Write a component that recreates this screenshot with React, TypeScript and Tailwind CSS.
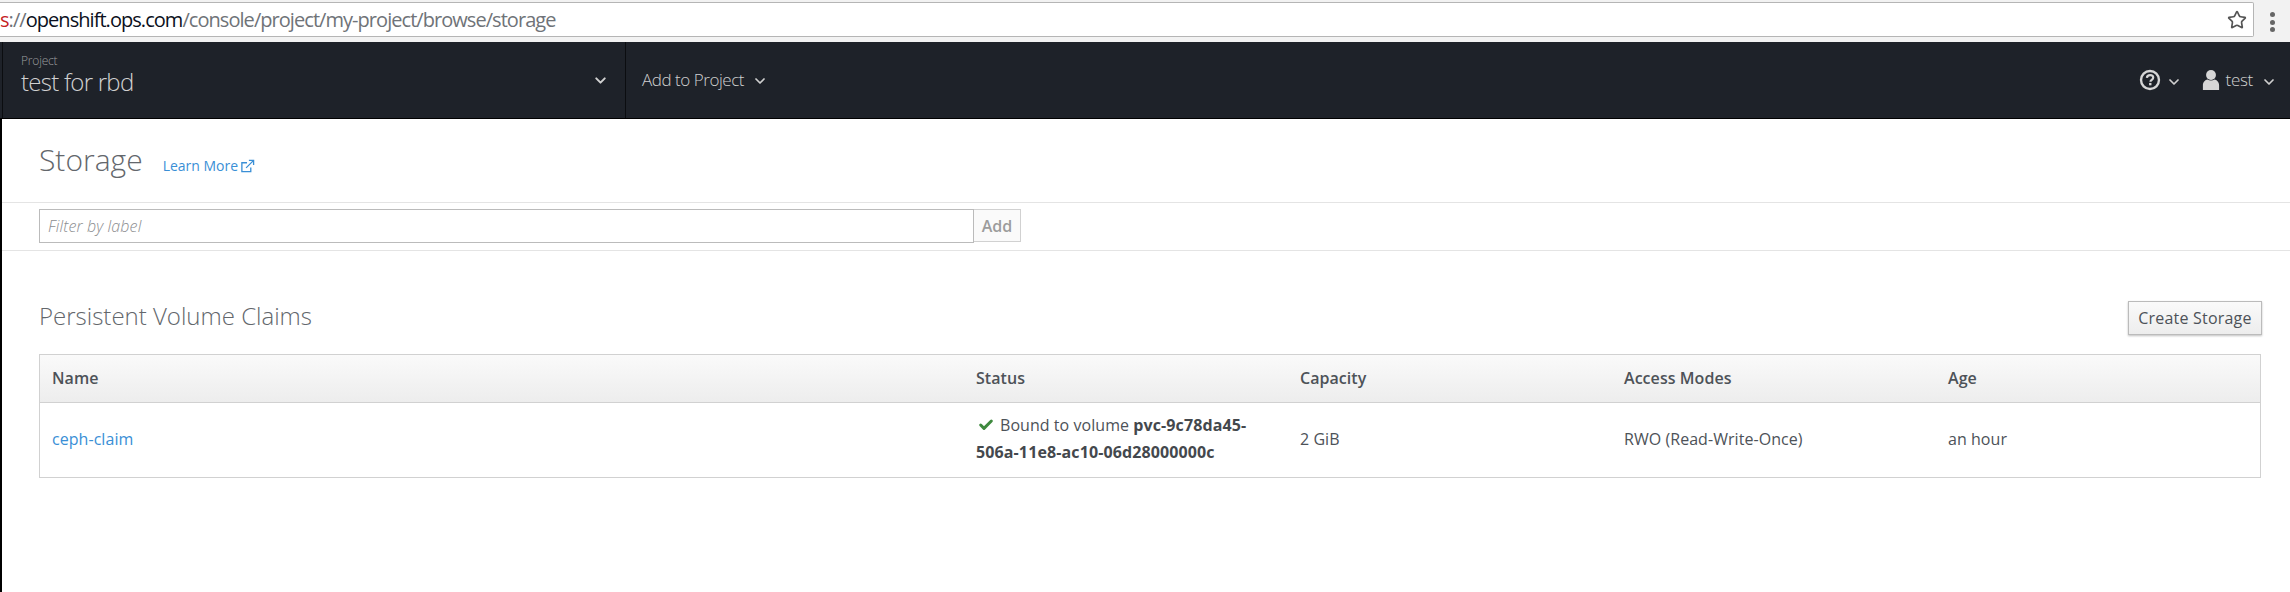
import React from 'react';
import { ChevronDown, Star, Check } from 'lucide-react';

const columns = [
  { label: 'Name', width: 'w-[924px]' },
  { label: 'Status', width: 'w-[324px]' },
  { label: 'Capacity', width: 'w-[324px]' },
  { label: 'Access Modes', width: 'w-[324px]' },
  { label: 'Age', width: 'flex-1' },
];

/* browser chrome cropped at the top of the screenshot */
const AddressBar = () => (
  <div className="h-[42px] bg-[#f2f2f2] pt-[2px] flex items-start">
    <div className="h-[35px] w-[2254px] bg-white border-t border-b border-r border-[#b5b5b5] rounded-r-[2px] flex items-center overflow-hidden">
      <span className="text-[20px] leading-none whitespace-nowrap font-['Open_Sans',sans-serif] tracking-[-0.95px]">
        <span className="text-[#c5221f]">s</span>
        <span className="text-[#6f7378]">://</span>
        <span className="text-[#0b1020]">openshift.ops.com</span>
        <span className="text-[#6f7378]">/console/project/my-project/browse/storage</span>
      </span>
      <Star size={20} strokeWidth={2} className="ml-auto mr-[6px] text-[#555]" />
    </div>
    <div className="flex-1 flex flex-col items-center gap-[2.5px] pt-[10px]">
      <i className="w-[5px] h-[5px] rounded-full bg-[#666]" />
      <i className="w-[5px] h-[5px] rounded-full bg-[#666]" />
      <i className="w-[5px] h-[5px] rounded-full bg-[#666]" />
    </div>
  </div>
);

const TopNav = () => (
  <div className="h-[77px] bg-[#1e2229] border-b border-black flex text-[#cfcfcf] font-['Open_Sans',sans-serif]">
    <div className="ml-[2px] w-[624px] border-l border-r border-[#0b0d10] flex items-start pl-[18px] pr-[16px]">
      <div className="pt-[11px]">
        <div className="text-[12px] leading-[16px] tracking-[-0.2px] font-light text-[#9c9d9f]">Project</div>
        <div className="text-[24px] leading-[25px] tracking-[-0.75px] font-light text-[#d1d1d1]">test for rbd</div>
      </div>
      <ChevronDown size={17} strokeWidth={2.8} className="ml-auto mt-[30px] text-[#d1d1d1]" />
    </div>
    <div className="pl-[16px] flex items-start pt-[25px] text-[17px] leading-[26px] tracking-[-0.45px] font-light">
      Add to Project
      <ChevronDown size={16} strokeWidth={2.6} className="ml-[8px] mt-[6px]" />
    </div>
    <div className="ml-auto mr-[13px] flex items-start pt-[25px] text-[17px] leading-[26px] tracking-[-0.3px] font-light">
      <svg viewBox="0 0 24 24" className="w-[22px] h-[22px] mt-[2px] text-[#d6d6d6]" fill="none">
        <circle cx="12" cy="12" r="9.8" stroke="currentColor" strokeWidth="2.6" />
        <path d="M8.6 9.6c.2-2 1.6-3 3.5-3 2 0 3.4 1.1 3.4 2.8 0 2.5-3 2.4-3 4.6" stroke="currentColor" strokeWidth="2.4" />
        <rect x="11" y="15.2" width="2.6" height="2.6" fill="currentColor" />
      </svg>
      <ChevronDown size={16} strokeWidth={2.6} className="ml-[5px] mt-[7px]" />
      <svg viewBox="0 0 20 24" className="w-[18px] h-[22px] ml-[20px] mt-[2px] text-[#d6d6d6]" fill="currentColor">
        <circle cx="10" cy="6.5" r="5.5" />
        <path d="M1 23v-5c0-4 3-6 5-6.5 2.4 1.4 5.600 1.400 8 0 2 .5 5 2.500 5 6.500v5z" />
      </svg>
      <span className="ml-[6px]">test</span>
      <ChevronDown size={16} strokeWidth={2.6} className="ml-[8px] mt-[7px]" />
    </div>
  </div>
);

const App = () => (
  <div className="h-[592px] bg-white overflow-hidden font-['Open_Sans',sans-serif] text-[#4d5258]">
    <AddressBar />
    <TopNav />
    <div className="border-l-2 border-black h-[473px]">
      {/* page title */}
      <div className="h-[84px] border-b border-[#e4e4e4] pl-[37px] flex items-start pt-[20px]">
        <h1 className="text-[30px] leading-[42px] font-light text-[#63676c]">Storage</h1>
        <a className="ml-[20px] mt-[17px] text-[14px] leading-[20px] text-[#3a8fd6] flex items-center">
          Learn More
          <svg viewBox="0 0 16 16" className="w-[15px] h-[15px] ml-[2px]" fill="none" stroke="currentColor" strokeWidth="1.4">
            <path d="M11.500 9v4.500h-9.500v-9.500h5.500" />
            <path d="M6.500 9.500 14 2M9.500 1.500h5v5" />
          </svg>
        </a>
      </div>

      {/* label filter */}
      <div className="h-[48px] border-b border-[#e4e4e4] pl-[37px] pt-[6px] flex items-start">
        <div className="w-[935px] h-[34px] border border-[#bbb] flex items-center pl-[8px] text-[16px] tracking-[0.12px] italic font-light text-[#8b8d8f]">
          Filter by label
        </div>
        <button className="w-[47px] h-[33px] border border-l-0 border-[#d1d1d1] bg-[#fafafa] text-[16px] font-semibold text-[#9c9c9c]">
          Add
        </button>
      </div>

      <div className="pl-[37px] pr-[29px]">
        <div className="flex items-start pt-[51px] h-[103px]">
          <h2 className="text-[24px] leading-[28px] font-light text-[#63676c]">Persistent Volume Claims</h2>
          <button className="ml-auto w-[134px] h-[34px] border border-[#bbb] bg-gradient-to-b from-[#fafafa] to-[#ededed] shadow-[0_1px_2px_rgba(0,0,0,0.25)] text-[16px] tracking-[0.2px] font-medium text-[#4d5258] -mr-px -mt-px">
            Create Storage
          </button>
        </div>

        <div className="border border-[#d1d1d1] text-[16px]">
          <div className="h-[48px] flex items-center bg-gradient-to-b from-[#fafafa] to-[#ededed] border-b border-[#d1d1d1] font-semibold tracking-[0.05px] pb-[2px]">
            {columns.map((c) => (
              <div key={c.label} className={`${c.width} pl-[12px]`}>{c.label}</div>
            ))}
          </div>
          <div className="h-[74px] flex items-center font-normal tracking-[0.05px] pb-[2px]">
            <div className="w-[924px] pl-[12px] text-[#3a8fd6]">ceph-claim</div>
            <div className="w-[324px] pl-[12px] pr-[8px] leading-[27px]">
              <Check size={16} strokeWidth={4.5} className="inline-block ml-[2px] mr-[6px] -mt-[3px] text-[#3f8a3f]" />
              Bound to volume <b className="font-bold text-[#44484d] tracking-[0.12px]">pvc-9c78da45-506a-11e8-ac10-06d28000000c</b>
            </div>
            <div className="w-[324px] pl-[12px]">2 GiB</div>
            <div className="w-[324px] pl-[12px]">RWO (Read-Write-Once)</div>
            <div className="flex-1 pl-[12px]">an hour</div>
          </div>
        </div>
      </div>
    </div>
  </div>
);

export default App;
